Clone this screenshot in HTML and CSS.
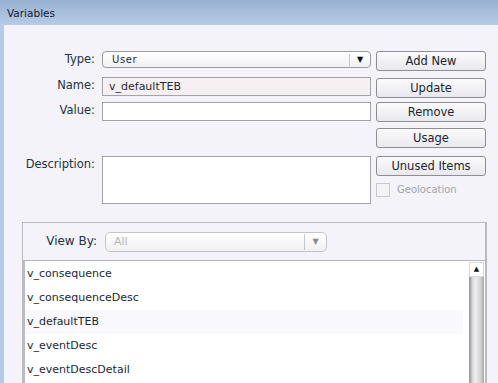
FILE: index.html
```html
<!DOCTYPE html>
<html>
<head>
  <title>Variables</title>
  <link rel="stylesheet" href="styles.css">
</head>
<body>
  <div class="window">
    <div class="titlebar">Variables</div>
    <div class="panel">
      <div class="form">
        <label class="lbl r1">Type:</label>
        <div class="select r1">
          <span class="select-text">User</span>
          <span class="select-arrow">&#9660;</span>
        </div>
        <div class="btn r1">Add New</div>

        <label class="lbl r2">Name:</label>
        <div class="field name r2">v_defaultTEB</div>
        <div class="btn r2 b2">Update</div>

        <label class="lbl r3">Value:</label>
        <div class="field r3"></div>
        <div class="btn r3">Remove</div>

        <div class="btn r4">Usage</div>

        <label class="lbl r5">Description:</label>
        <div class="textarea r5"></div>
        <div class="btn r5">Unused Items</div>

        <div class="check r6">
          <span class="box"></span>
          <span class="check-text">Geolocation</span>
        </div>
      </div>

      <div class="group">
        <div class="viewby">
          <label class="lbl vb-lbl">View By:</label>
          <div class="select disabled">
            <span class="select-text">All</span>
            <span class="select-arrow">&#9660;</span>
          </div>
        </div>
        <div class="list">
          <div class="items">
            <div class="item">v_consequence</div>
            <div class="item">v_consequenceDesc</div>
            <div class="item hover">v_defaultTEB</div>
            <div class="item">v_eventDesc</div>
            <div class="item">v_eventDescDetail</div>
          </div>
          <div class="scrollbar">
            <div class="sb-up">&#9650;</div>
            <div class="sb-track"></div>
          </div>
        </div>
      </div>
    </div>
  </div>
</body>
</html>
```

FILE: styles.css
```css
body {
  margin: 0;
  font-family: "DejaVu Sans", Verdana, sans-serif;
  font-size: 11px;
  color: #1d2b38;
  background: #b6cbe5;
  overflow: hidden;
}

.window {
  width: 498px;
  height: 383px;
  display: flex;
  flex-direction: column;
}

/* barra de titulo */
.titlebar {
  height: 25px;
  flex: none;
  padding-left: 7px;
  line-height: 27px;
  font-size: 10.5px;
  color: #10202e;
  background: linear-gradient(#97b0d1, #b7cbe5);
}

.panel {
  flex: 1;
  margin-left: 4px;
  background: #f4f3f9;
  padding-top: 26px;
  overflow: hidden;
}

/* formulario de cima */
.form {
  display: grid;
  grid-template-columns: 92px 270px 110px;
  grid-template-rows: 26px 25px 26px 28px 26px 21px;
  column-gap: 5px;
}

.lbl {
  grid-column: 1;
  text-align: right;
  padding-right: 1px;
  line-height: 17px;
  font-size: 11.5px;
  color: #223242;
}

.r1 { grid-row: 1; }
.r2 { grid-row: 2; }
.r3 { grid-row: 3; }
.r4 { grid-row: 4; grid-column: 3; }
.r5 { grid-row: 5; }
.r6 { grid-row: 6; grid-column: 3; }

.select {
  grid-column: 2;
  height: 17px;
  box-sizing: border-box;
  border: 1px solid #9c9c9f;
  border-radius: 4px;
  background: linear-gradient(#ffffff, #f1f0f4);
  display: flex;
  align-items: center;
  margin-left: 1px;
}

.select-text {
  flex: 1;
  padding-left: 9px;
  font-size: 10px;
  letter-spacing: 0.6px;
  color: #1d2b38;
}

.select-arrow {
  width: 20px;
  border-left: 1px solid #c6c6c9;
  text-align: center;
  font-size: 8px;
  line-height: 12px;
  color: #111;
}

.field {
  grid-column: 2;
  height: 19px;
  box-sizing: border-box;
  border: 1px solid #a4a4a8;
  background: #ffffff;
  padding-left: 6px;
  line-height: 17px;
  margin-left: 1px;
}

.field.name {
  background: #f7f0f3;
  font-size: 11px;
}

.textarea {
  grid-column: 2;
  grid-row: 5 / span 2;
  height: 48px;
  box-sizing: border-box;
  border: 1px solid #a4a4a8;
  background: #ffffff;
  margin-left: 1px;
}

.btn {
  grid-column: 3;
  height: 20px;
  box-sizing: border-box;
  border: 1px solid #8d8d92;
  border-radius: 3px;
  background: linear-gradient(#fbfbfd, #e9e8ed);
  text-align: center;
  line-height: 18px;
  font-size: 11.5px;
  color: #1a2531;
}

.b2 { margin-top: 1px; }

.check {
  display: flex;
  align-items: center;
  gap: 7px;
  height: 15px;
}

.box {
  width: 14px;
  height: 14px;
  box-sizing: border-box;
  border: 1px solid #c9c9cd;
  background: #f3f2f7;
}

.check-text {
  font-size: 10px;
  color: #a2a5ab;
}

/* caixa de grupo de baixo */
.group {
  margin: 19px 0 0 18px;
  width: 465px;
  height: 200px;
  box-sizing: border-box;
  border: 1px solid #b9b9bf;
  border-right-width: 2px;
  border-bottom: none;
  display: flex;
  flex-direction: column;
}

.viewby {
  height: 37px;
  flex: none;
  display: grid;
  grid-template-columns: 75px 222px;
  column-gap: 7px;
  align-items: center;
}

.vb-lbl {
  font-size: 12px;
}

.viewby .select {
  height: 20px;
  margin-left: 0;
  border-color: #c5c5c9;
  border-radius: 5px;
}

.select.disabled .select-text {
  font-size: 11px;
  letter-spacing: 0;
  padding-left: 8px;
  color: #b3b6bb;
}

.select.disabled .select-arrow {
  color: #8a8d92;
  width: 21px;
  line-height: 16px;
}

.list {
  flex: 1;
  display: flex;
  border-top: 1px solid #b4b4b9;
  border-left: 2px solid #bcbcc1;
  background: #ffffff;
}

.items {
  flex: 1;
  padding-top: 1px;
}

.item {
  height: 24px;
  line-height: 24px;
  padding-left: 2px;
  font-size: 11px;
  color: #1b2935;
}

.item.hover {
  background: #f9f8fc;
  margin-right: 6px;
}

.scrollbar {
  width: 15px;
  margin: 1px 1px 0 0;
  display: flex;
  flex-direction: column;
}

.sb-up {
  height: 15px;
  background: #ffffff;
  border: 1px solid #d9d9dc;
  box-sizing: border-box;
  text-align: center;
  font-size: 7px;
  line-height: 13px;
  color: #111;
}

.sb-track {
  flex: 1;
  background: linear-gradient(to right, #8f8f93, #dcdcdf 25%, #eeeef0 45%, #cfcfd2 80%, #a2a2a6);
}
```
